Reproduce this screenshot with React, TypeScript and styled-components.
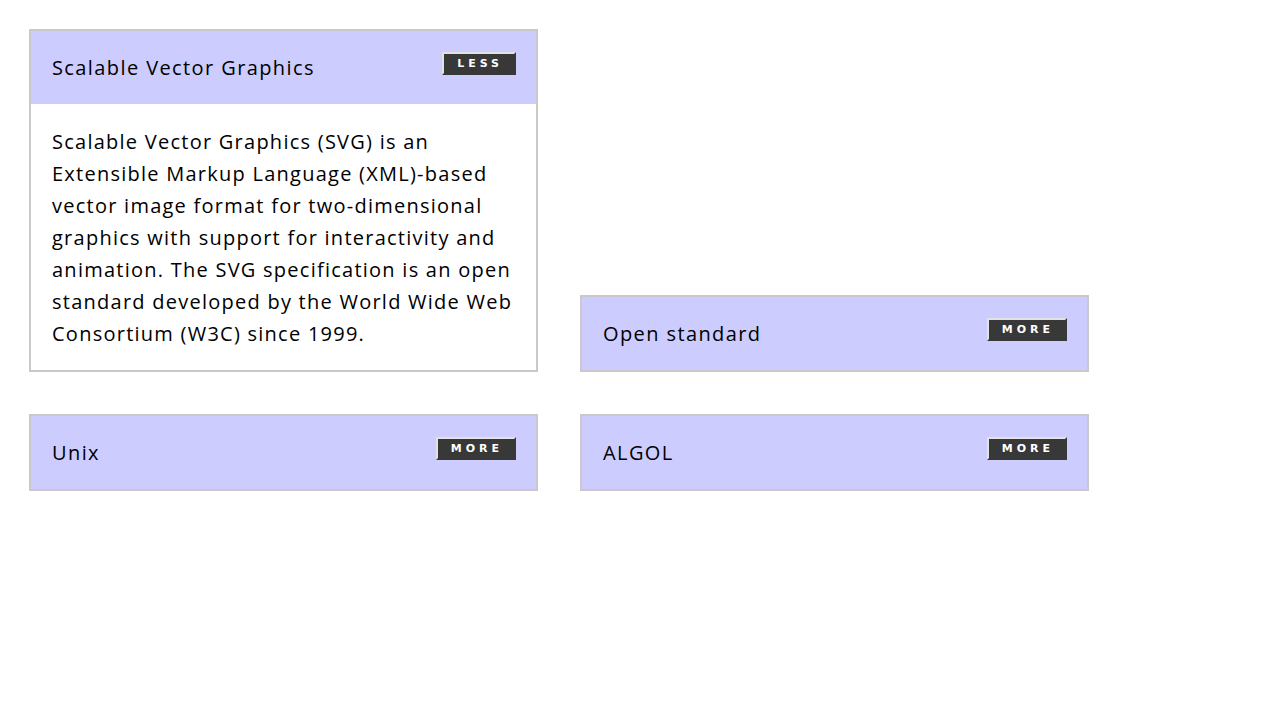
import React, { useState } from "react";
import styled, { createGlobalStyle } from "styled-components";

const GlobalStyle = createGlobalStyle`
  body {
    margin: 0;
    background: #ffffff;
    font-family: "Open Sans", "Noto Sans", sans-serif;
    color: #000000;
  }
`;

const Grid = styled.div`
  display: grid;
  grid-template-columns: repeat(2, 509px);
  column-gap: 42px;
  row-gap: 42px;
  align-items: end;
  padding: 29px;
`;

const Card = styled.section`
  border: 2px solid #cbc8cb;
  background: #ffffff;
`;

const Header = styled.div`
  box-sizing: border-box;
  height: 73px;
  padding: 21px 20px 0 21px;
  background: #ccccff;
  display: flex;
  justify-content: space-between;
  align-items: flex-start;
`;

const Title = styled.h2`
  margin: 2px 0 0;
  font-size: 20px;
  font-weight: 400;
  line-height: 28px;
  letter-spacing: 1.4px;
`;

const Toggle = styled.button`
  box-sizing: border-box;
  height: 23px;
  padding: 0 11px 0 13px;
  border: 2px outset #d8d8d8;
  border-color: #e2e2e2 #8c8c8c #8c8c8c #e2e2e2;
  background: #383838;
  color: #ffffff;
  font-family: "DejaVu Sans", Verdana, sans-serif;
  font-size: 11px;
  font-weight: 700;
  letter-spacing: 4px;
  line-height: 17px;
  cursor: pointer;
`;

const Body = styled.p`
  margin: 0;
  padding: 22px 20px 20px 21px;
  font-size: 20px;
  line-height: 32px;
  letter-spacing: 1.25px;
`;

type Item = { title: string; text?: string; open: boolean };

const items: Item[] = [
  {
    title: "Scalable Vector Graphics",
    text: "Scalable Vector Graphics (SVG) is an Extensible Markup Language (XML)-based vector image format for two-dimensional graphics with support for interactivity and animation. The SVG specification is an open standard developed by the World Wide Web Consortium (W3C) since 1999.",
    open: true,
  },
  { title: "Open standard", open: false },
  { title: "Unix", open: false },
  { title: "ALGOL", open: false },
];

const Panel: React.FC<{ item: Item }> = ({ item }) => {
  const [open, setOpen] = useState(item.open);
  return (
    <Card>
      <Header>
        <Title>{item.title}</Title>
        <Toggle onClick={() => setOpen(!open)}>{open ? "LESS" : "MORE"}</Toggle>
      </Header>
      {open && item.text ? <Body>{item.text}</Body> : null}
    </Card>
  );
};

export default function App() {
  return (
    <>
      <GlobalStyle />
      <Grid>
        {items.map((item) => (
          <Panel key={item.title} item={item} />
        ))}
      </Grid>
    </>
  );
}
